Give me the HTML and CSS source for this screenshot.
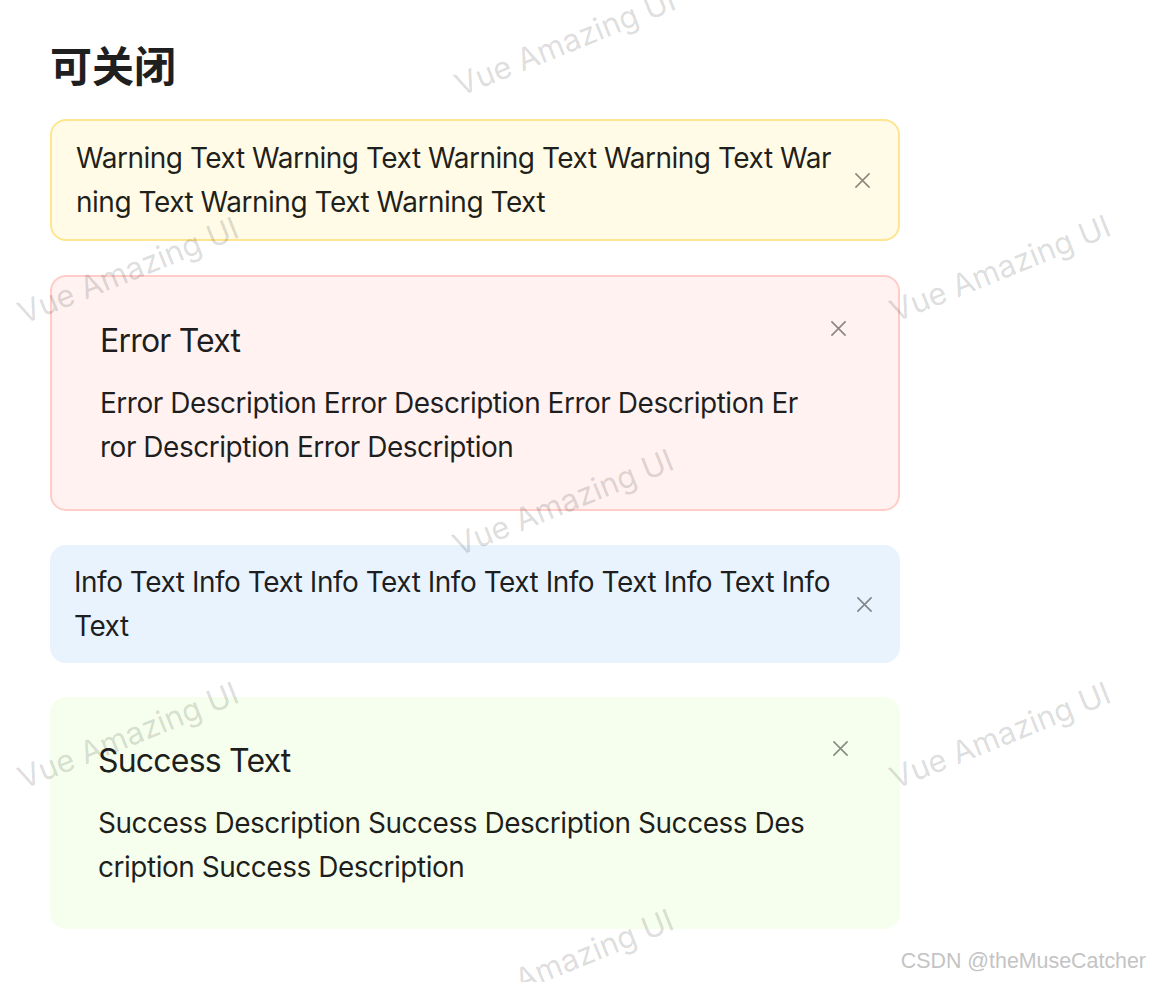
FILE: index.html
```html
<!DOCTYPE html>
<html lang="zh-CN">

<head>
    <meta charset="UTF-8">
    <meta name="viewport" content="width=device-width, initial-scale=1.0">
    <title>Alert 警告提示 - 可关闭</title>
    <link rel="stylesheet" href="styles.css">
</head>

<body>
    <div class="page">
        <h2 class="section-title">可关闭</h2>

        <div class="alert alert-warning">
            <div class="alert-content">
                <div class="alert-message">Warning Text Warning Text Warning Text Warning Text Warning Text Warning Text Warning Text</div>
            </div>
            <button class="alert-close" type="button" aria-label="close">
                <svg viewBox="0 0 18 18" width="17" height="17"><path d="M1.5 1.5L16.5 16.5M16.5 1.5L1.5 16.5" /></svg>
            </button>
        </div>

        <div class="alert alert-error alert-with-desc">
            <div class="alert-content">
                <div class="alert-message">Error Text</div>
                <div class="alert-description">Error Description Error Description Error Description Error Description Error Description</div>
            </div>
            <button class="alert-close" type="button" aria-label="close">
                <svg viewBox="0 0 18 18" width="17" height="17"><path d="M1.5 1.5L16.5 16.5M16.5 1.5L1.5 16.5" /></svg>
            </button>
        </div>

        <div class="alert alert-info alert-borderless">
            <div class="alert-content">
                <div class="alert-message">Info Text Info Text Info Text Info Text Info Text Info Text Info Text</div>
            </div>
            <button class="alert-close" type="button" aria-label="close">
                <svg viewBox="0 0 18 18" width="17" height="17"><path d="M1.5 1.5L16.5 16.5M16.5 1.5L1.5 16.5" /></svg>
            </button>
        </div>

        <div class="alert alert-success alert-with-desc alert-borderless">
            <div class="alert-content">
                <div class="alert-message">Success Text</div>
                <div class="alert-description">Success Description Success Description Success Description Success Description</div>
            </div>
            <button class="alert-close" type="button" aria-label="close">
                <svg viewBox="0 0 18 18" width="17" height="17"><path d="M1.5 1.5L16.5 16.5M16.5 1.5L1.5 16.5" /></svg>
            </button>
        </div>
    </div>

    <!-- watermark overlay -->
    <div class="watermark" aria-hidden="true">
        <span class="wm-text" style="left: 565px; top: 42px;">Vue Amazing UI</span>
        <span class="wm-text" style="left: 128px; top: 270px;">Vue Amazing UI</span>
        <span class="wm-text" style="left: 1000px; top: 268px;">Vue Amazing UI</span>
        <span class="wm-text" style="left: 563px; top: 502px;">Vue Amazing UI</span>
        <span class="wm-text" style="left: 128px; top: 735px;">Vue Amazing UI</span>
        <span class="wm-text" style="left: 1000px; top: 735px;">Vue Amazing UI</span>
        <span class="wm-text" style="left: 563px; top: 962px;">Vue Amazing UI</span>
    </div>

    <div class="csdn-mark">CSDN @theMuseCatcher</div>
</body>

</html>
```

FILE: styles.css
```css
html,
body {
    margin: 0;
    height: 100%;
    overflow: hidden;
}

body {
    font-family: Inter, "Noto Sans", "Noto Sans CJK SC", sans-serif;
    background-color: #ffffff;
    color: rgba(0, 0, 0, 0.88);
    position: relative;
}

.page {
    width: 850px;
    padding: 36px 50px;
    display: flex;
    flex-direction: column;
    gap: 34px;
}

.section-title {
    font-family: "Noto Sans CJK SC", sans-serif;
    font-size: 42px;
    line-height: 56px;
    font-weight: 700;
    color: #1f1f1f;
    margin: 0 0 -7px;
}

.alert {
    display: flex;
    align-items: center;
    padding: 15px 24px;
    border: 2px solid transparent;
    border-radius: 16px;
    font-size: 28px;
    line-height: 44px;
    letter-spacing: -0.48px;
    word-break: break-all;
}

.alert-borderless {
    border: none;
}

.alert-content {
    flex: 1;
    min-width: 0;
}

.alert-close {
    flex: none;
    width: 24px;
    height: 22px;
    margin-left: 15px;
    padding: 0;
    border: none;
    background: none;
    display: flex;
    align-items: center;
    justify-content: center;
    cursor: pointer;
}

.alert-close svg {
    fill: none;
    stroke: rgba(0, 0, 0, 0.45);
    stroke-width: 1.7;
}

.alert-with-desc {
    align-items: flex-start;
    padding: 40px 48px;
}

.alert-with-desc .alert-message {
    font-size: 32px;
    line-height: 48px;
    letter-spacing: -0.8px;
    margin-bottom: 16px;
}

.alert-with-desc .alert-close {
    margin-left: 19px;
}

.alert-warning {
    background-color: #fffbe6;
    border-color: #ffe58f;
}

.alert-error {
    background-color: #fff2f0;
    border-color: #ffccc7;
}

.alert-info {
    background-color: #e8f3fe;
}

.alert-success {
    background-color: #f6ffed;
}

.watermark {
    position: absolute;
    inset: 0;
    pointer-events: none;
    overflow: hidden;
}

.wm-text {
    position: absolute;
    transform: translate(-50%, -50%) rotate(-22deg);
    white-space: nowrap;
    font-size: 31px;
    color: rgba(0, 0, 0, 0.15);
}

.csdn-mark {
    position: absolute;
    right: 4px;
    bottom: 8px;
    font-family: "Liberation Sans", Arial, sans-serif;
    font-size: 21.4px;
    color: #c4c4c4;
    text-shadow: 0 0 1px #ffffff;
    pointer-events: none;
}
```
